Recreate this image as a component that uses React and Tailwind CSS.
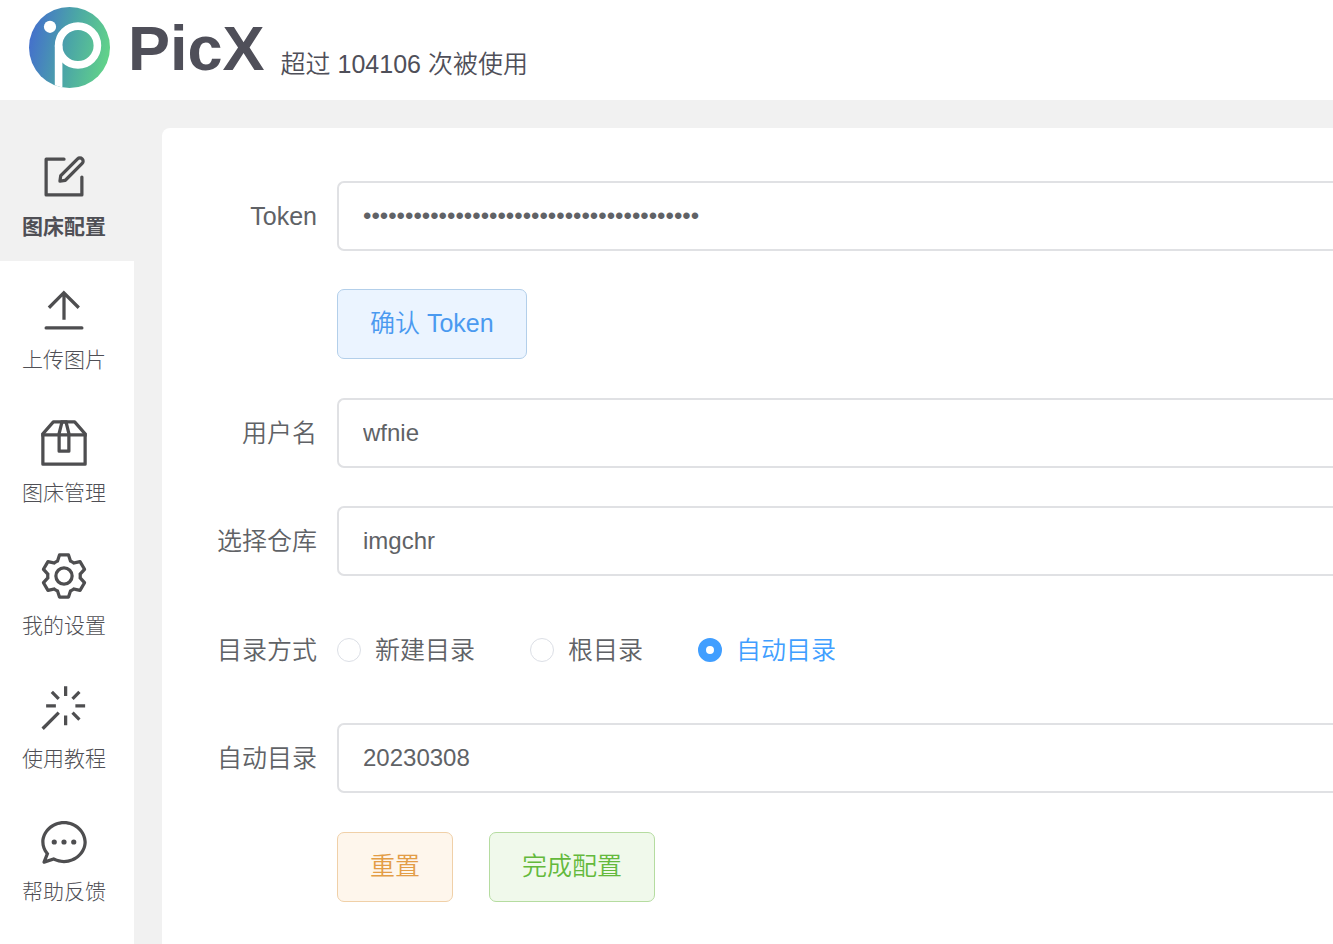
import { useState } from 'react'

const ICONS = {
  edit: [
    'M832 512a32 32 0 1 1 64 0v352a32 32 0 0 1-32 32H160a32 32 0 0 1-32-32V160a32 32 0 0 1 32-32h352a32 32 0 0 1 0 64H192v640h640V512z',
    'm469.952 554.24 52.8-7.552L847.104 222.4a32 32 0 1 0-45.248-45.248L477.44 501.44l-7.552 52.8zm422.4-422.4a96 96 0 0 1 0 135.808l-331.84 331.84a32 32 0 0 1-18.112 9.088L436.8 623.68a32 32 0 0 1-36.224-36.224l15.104-105.6a32 32 0 0 1 9.024-18.112l331.904-331.84a96 96 0 0 1 135.744 0z',
  ],
  upload: [
    'M160 832h704a32 32 0 1 1 0 64H160a32 32 0 1 1 0-64zm384-578.304V704h-64V247.296L237.248 490.048 192 444.8 508.8 128l316.8 316.8-45.312 45.248L544 253.696z',
  ],
  box: [
    'M317.056 128 128 344.064V896h768V344.064L706.944 128H317.056zm-14.528-64h418.944a32 32 0 0 1 24.064 10.88l206.528 236.096A32 32 0 0 1 960 332.032V928a32 32 0 0 1-32 32H96a32 32 0 0 1-32-32V332.032a32 32 0 0 1 7.936-21.12L278.4 75.008A32 32 0 0 1 302.528 64z',
    'M64 320h896v64H64z',
    'M448 327.872V640h128V327.872L526.08 128h-28.16L448 327.872zM448 64h128l64 256v352a32 32 0 0 1-32 32H416a32 32 0 0 1-32-32V320l64-256z',
  ],
  setting: [
    'M600.704 64a32 32 0 0 1 30.464 22.208l35.2 109.376c14.784 7.232 28.928 15.36 42.432 24.512l112.384-24.192a32 32 0 0 1 34.432 15.36L944.32 364.8a32 32 0 0 1-4.032 37.504l-77.12 85.12a357.12 357.12 0 0 1 0 49.024l77.12 85.248a32 32 0 0 1 4.032 37.504l-88.704 153.6a32 32 0 0 1-34.432 15.296L708.8 803.904c-13.44 9.088-27.648 17.28-42.368 24.512l-35.264 109.376A32 32 0 0 1 600.704 960H423.296a32 32 0 0 1-30.464-22.208L357.696 828.48a351.616 351.616 0 0 1-42.56-24.64l-112.32 24.256a32 32 0 0 1-34.432-15.36L79.68 659.2a32 32 0 0 1 4.032-37.504l77.12-85.248a357.12 357.12 0 0 1 0-48.896l-77.12-85.248A32 32 0 0 1 79.68 364.8l88.704-153.6a32 32 0 0 1 34.432-15.296l112.32 24.256c13.568-9.152 27.776-17.408 42.56-24.64l35.2-109.312A32 32 0 0 1 423.232 64H600.64zm-23.424 64H446.72l-36.352 113.088-24.512 11.968a294.113 294.113 0 0 0-34.816 20.096l-22.656 15.36-116.224-25.088-65.28 113.152 79.68 88.192-1.92 27.136a293.12 293.12 0 0 0 0 40.192l1.92 27.136-79.808 88.192 65.344 113.152 116.224-25.024 22.656 15.296a294.113 294.113 0 0 0 34.816 20.096l24.512 11.968L446.72 896h130.688l36.48-113.152 24.448-11.904a288.282 288.282 0 0 0 34.752-20.096l22.592-15.296 116.288 25.024 65.28-113.152-79.744-88.192 1.92-27.136a293.12 293.12 0 0 0 0-40.256l-1.92-27.136 79.808-88.128-65.344-113.152-116.288 24.96-22.592-15.232a287.616 287.616 0 0 0-34.752-20.096l-24.448-11.904L577.344 128zM512 320a192 192 0 1 1 0 384 192 192 0 0 1 0-384zm0 64a128 128 0 1 0 0 256 128 128 0 0 0 0-256z',
  ],
  magic: [
    'M512 64h64v192h-64V64zm0 576h64v192h-64V640zM160 480v-64h192v64H160zm576 0v-64h192v64H736zM249.856 199.04l45.248-45.184L430.848 289.6 385.6 334.848 249.856 199.104zM657.152 606.4l45.248-45.248 135.744 135.744-45.248 45.248L657.152 606.4zM114.048 923.2 68.8 877.952l316.8-316.8 45.248 45.248-316.8 316.8zM702.4 334.848 657.152 289.6l135.744-135.744 45.248 45.248L702.4 334.848z',
  ],
  chat: [
    'm174.72 855.68 135.296-45.12 23.68 11.84C388.096 849.536 448.576 864 512 864c211.84 0 384-166.784 384-352S723.84 160 512 160 128 326.784 128 512c0 69.12 24.96 139.264 70.848 199.232l22.08 28.8-46.272 115.584zm-45.248 82.56A32 32 0 0 1 89.6 896l58.368-145.92C94.72 680.32 64 596.864 64 512 64 299.904 256 96 512 96s448 203.904 448 416-192 416-448 416a461.056 461.056 0 0 1-206.912-48.384l-175.616 58.56z',
    'M512 563.2a51.2 51.2 0 1 1 0-102.4 51.2 51.2 0 0 1 0 102.4zm192 0a51.2 51.2 0 1 1 0-102.4 51.2 51.2 0 0 1 0 102.4zm-384 0a51.2 51.2 0 1 1 0-102.4 51.2 51.2 0 0 1 0 102.4z',
  ],
}

const NAV = [
  { icon: 'edit', text: '图床配置' },
  { icon: 'upload', text: '上传图片' },
  { icon: 'box', text: '图床管理' },
  { icon: 'setting', text: '我的设置' },
  { icon: 'magic', text: '使用教程' },
  { icon: 'chat', text: '帮助反馈' },
]

const DIR_MODES = ['新建目录', '根目录', '自动目录']

function Icon({ name }) {
  return (
    <svg viewBox="0 0 1024 1024" fill="currentColor" className="size-[52px] text-[#4e4e50]" aria-hidden="true">
      {ICONS[name].map((d) => (
        <path key={d} d={d} />
      ))}
    </svg>
  )
}

function Logo() {
  return (
    <svg viewBox="0 0 81 81" className="size-[81px] shrink-0" aria-hidden="true">
      <defs>
        <linearGradient id="logo-fill" x1="0" y1="0.4" x2="1" y2="0.6">
          <stop offset="0" stopColor="#4470cc" />
          <stop offset="0.5" stopColor="#4ba6a6" />
          <stop offset="1" stopColor="#62d488" />
        </linearGradient>
        <clipPath id="logo-clip">
          <circle cx="40.5" cy="40.5" r="40.5" />
        </clipPath>
      </defs>
      <g clipPath="url(#logo-clip)">
        <rect width="81" height="81" fill="url(#logo-fill)" />
        <circle cx="49" cy="38.5" r="19.4" fill="none" stroke="#fff" strokeWidth="7.6" />
        <path d="M29.6 38.5V81" stroke="#fff" strokeWidth="7.6" />
        <circle cx="21" cy="19.8" r="6.1" fill="#fff" />
      </g>
    </svg>
  )
}

function Row({ label, htmlFor, children }) {
  return (
    <div className="flex h-[70px] items-center gap-5">
      <div className="w-[155px] shrink-0 pb-px text-right">
        {label && <label htmlFor={htmlFor}>{label}</label>}
      </div>
      {children}
    </div>
  )
}

function TextField({ id, label, value, type = 'text' }) {
  return (
    <Row label={label} htmlFor={id}>
      <input
        id={id}
        type={type}
        defaultValue={value}
        autoComplete="off"
        className="h-full min-w-0 flex-1 rounded-l-[7px] border-2 border-r-0 border-[#e0e1e4] bg-white pl-6 text-[24px] outline-none focus:border-[#409eff]"
      />
    </Row>
  )
}

function Button({ className, children }) {
  return (
    <button type="button" className={`h-full cursor-pointer rounded-[7px] border px-8 pb-0.5 ${className}`}>
      {children}
    </button>
  )
}

export default function App() {
  const [mode, setMode] = useState('自动目录')

  return (
    <div className="flex min-h-screen flex-col bg-[#f1f1f1] font-['Liberation_Sans','Noto_Sans_CJK_SC',sans-serif] text-[25px] leading-[36px] font-[350] text-[#606266]">
      <header className="flex h-[100px] items-start bg-white pt-[7px] pl-[29px] text-[#4f4f59]">
        <Logo />
        <div className="flex items-end gap-4 pl-[18px]">
          <h1 className="text-[63px] leading-[83px] font-bold">PicX</h1>
          <p className="pb-2">超过 104106 次被使用</p>
        </div>
      </header>

      <div className="flex flex-1 gap-7 pt-7">
        <nav className="w-[134px] shrink-0 bg-white text-[21px] leading-[30px] font-light text-[#4f4f55]">
          {NAV.map((item, i) => (
            <a
              key={item.text}
              href="#"
              className={`flex h-[133px] flex-col items-center gap-[9px] pt-[23px] pr-1.5 ${
                i === 0 ? 'bg-[#f1f1f1] font-bold' : 'bg-white'
              }`}
            >
              <Icon name={item.icon} />
              <span>{item.text}</span>
            </a>
          ))}
        </nav>

        <main className="min-w-0 flex-1 rounded-tl-lg bg-white pt-[53px]">
          <form className="flex flex-col gap-[39px]">
            <div className="flex flex-col gap-[38px]">
              <TextField
                id="token"
                label="Token"
                type="password"
                value="0000000000000000000000000000000000000000"
              />
              <Row>
                <Button className="border-[#b3cfea] bg-[#ebf4ff] text-[#4a9af0]">确认 Token</Button>
              </Row>
            </div>

            <div className="flex flex-col gap-[38px]">
              <TextField id="owner" label="用户名" value="wfnie" />
              <TextField id="repo" label="选择仓库" value="imgchr" />
            </div>

            <div className="flex flex-col gap-[38px]">
              <Row label="目录方式" htmlFor="mode-0">
                <div className="flex gap-[55px] pb-px">
                  {DIR_MODES.map((name, i) => (
                    <label
                      key={name}
                      className={`flex cursor-pointer items-center gap-[14px] ${
                        mode === name ? 'text-[#409eff]' : ''
                      }`}
                    >
                      <input
                        id={`mode-${i}`}
                        type="radio"
                        name="mode"
                        checked={mode === name}
                        onChange={() => setMode(name)}
                        className="size-6 appearance-none rounded-full border border-[#dcdfe6] bg-white checked:border-8 checked:border-[#409eff]"
                      />
                      {name}
                    </label>
                  ))}
                </div>
              </Row>
              <TextField id="dir" label="自动目录" value="20230308" />
            </div>

            <Row>
              <div className="flex h-full gap-9">
                <Button className="border-[#f0d0a8] bg-[#fef6ec] text-[#e39d46]">重置</Button>
                <Button className="border-[#b5dca0] bg-[#f0f9eb] text-[#64b93c]">完成配置</Button>
              </div>
            </Row>
          </form>
        </main>
      </div>
    </div>
  )
}
